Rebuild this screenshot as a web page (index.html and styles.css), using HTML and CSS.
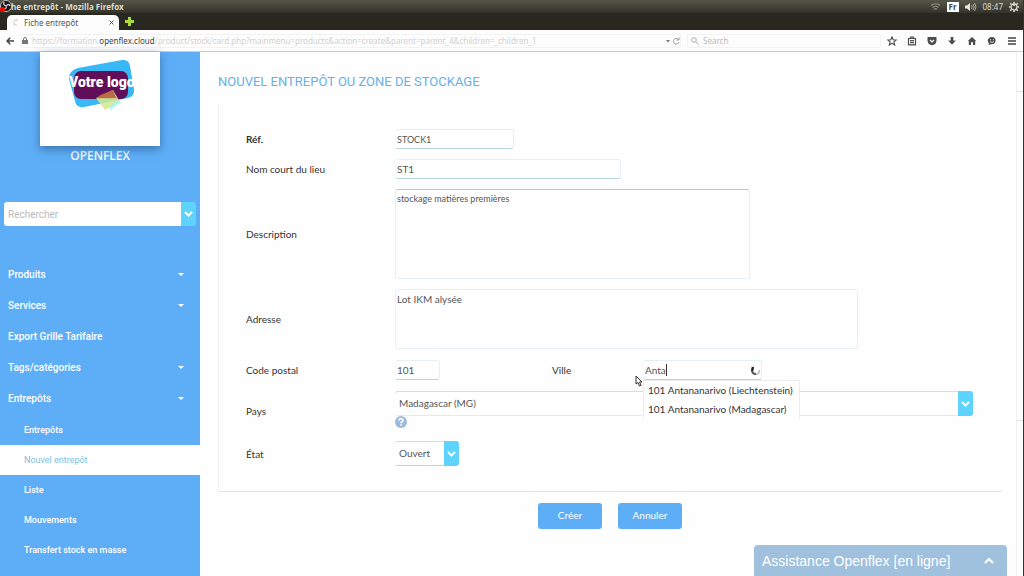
FILE: index.html
```html
<!DOCTYPE html>
<html lang="fr">
<head>
<meta charset="utf-8">
<title>Fiche entrepôt</title>
<link rel="stylesheet" href="styles.css">
</head>
<body>
<header class="browser">
  <div class="system-bar">
    <svg class="recorder" viewBox="0 0 14 14"><circle cx="6" cy="6" r="5.5" fill="#161616" stroke="#ddd" stroke-width=".8"/><path d="M6 6Q3 5 4 2M6 6Q9 3 10 6M6 6Q7 9 4 9" fill="none" stroke="#ccc" stroke-width="1.3"/><circle cx="2.5" cy="9.5" r="2.5" fill="#f00"/></svg>
    <span class="window-title">che entrepôt - Mozilla Firefox</span>
    <div class="tray">
      <svg width="11" height="10" viewBox="0 0 11 10" fill="none" stroke="#8d8c83" stroke-width="1.2"><path d="M1 3.5Q5.500 0 10 3.500M2.500 5.500Q5.500 3 8.500 5.500M4 7.300Q5.500 6 7 7.300"/></svg>
      <span class="lang">Fr</span>
      <svg width="12" height="10" viewBox="0 0 12 10"><path d="M0 3.500H2L5 1V9L2 6.500H0Z" fill="#e6e4dd"/><path d="M6.500 3Q8 5 6.500 7M8 2Q10.500 5 8 8M9.500 1Q12.500 5 9.500 9" fill="none" stroke="#aaa89f"/></svg>
      <span>08:47</span>
      <svg width="10" height="10" viewBox="0 0 10 10" fill="none" stroke="#dfdcd2"><circle cx="5" cy="5" r="3" stroke-width="1.300"/><path stroke-width="1.500" d="M5 0V4M5 8.500V10M0 5H1.500M8.500 5H10M1.300 1.300L2.500 2.500M7.500 7.500L8.700 8.700M8.700 1.300L7.500 2.500M2.500 7.500L1.300 8.700"/></svg>
    </div>
  </div>
  <div class="tab-bar">
    <div class="tab">
      <svg width="7" height="7" viewBox="0 0 7 7" fill="none" stroke="#c4c9ba"><path d="M1 2Q3 0 5 1M1 3V6H4"/></svg>
      <span class="tab-name">Fiche entrepôt</span>
      <button class="plain" aria-label="Fermer l'onglet"><svg width="5" height="5" viewBox="0 0 5 5" stroke="#555"><path d="M.5 .5L4.500 4.500M4.500 .5L.5 4.500"/></svg></button>
    </div>
    <button class="plain new-tab" aria-label="Nouvel onglet"><svg width="9" height="9" viewBox="0 0 9 9"><path d="M3 0H6V3H9V6H6V9H3V6H0V3H3Z" fill="#aadd3a"/></svg></button>
  </div>
  <div class="nav-bar">
    <button class="plain back" aria-label="Retour"><svg width="8" height="8" viewBox="0 0 8 8" fill="none" stroke="#444" stroke-width="1.600"><path d="M4.200 .7L1 4L4.200 7.300M1 4H8"/></svg></button>
    <div class="address">
      <svg width="6" height="7" viewBox="0 0 6 7"><path d="M1.500 3V2Q1.500 .6 3 .6T4.500 2V3" fill="none" stroke="#777"/><path d="M0 3H6V7H0Z" fill="#777"/></svg>
      <span class="url">https://formation.<b>openflex.cloud</b>/product/stock/card.php?mainmenu=products&amp;action=create&amp;parent=parent_4&amp;children=_children_1</span>
      <svg width="14" height="8" viewBox="0 0 14 8"><path d="M0 3H4L2 5.500Z" fill="#777"/><path d="M12.500 2.500A2.800 2.800 0 1 0 13 5M13 .5V3H10.500" fill="none" stroke="#999"/></svg>
    </div>
    <label class="search"><svg width="8" height="8" viewBox="0 0 8 8" fill="none" stroke="#aaa"><circle cx="3" cy="3" r="2.300"/><path d="M4.700 4.700L7.500 7.500"/></svg><input type="text" placeholder="Search" aria-label="Search"></label>
    <div class="tools">
      <svg width="10" height="10" viewBox="0 0 10 10" fill="none" stroke="#4c4c4c" stroke-width="1.100"><path d="M5 .9L6.200 3.700L9.300 3.900L6.900 5.900L7.700 9L5 7.300L2.300 9L3.100 5.900L.7 3.900L3.800 3.700Z"/></svg>
      <svg width="10" height="10" viewBox="0 0 10 10" fill="none" stroke="#4c4c4c" stroke-width="1.200"><path d="M1.500 2.500H8.500V8.800H1.500ZM3.500 2V1H6.500V2M3 4.700H7M3 6.700H7"/></svg>
      <svg width="10" height="10" viewBox="0 0 10 10"><path d="M.5 1H9.500V4.500Q9 9 5 9.200Q1 9 .5 4.500Z" fill="#4c4c4c"/><path d="M3 4L5 6L7 4" fill="none" stroke="#fff" stroke-width="1.200"/></svg>
      <svg width="10" height="10" viewBox="0 0 10 10"><path d="M3.700 1H6.300V4.500H8.800L5 8.800L1.200 4.500H3.700Z" fill="#4c4c4c"/></svg>
      <svg width="10" height="10" viewBox="0 0 10 10"><path d="M5 1L9.200 5H8.200V9H6V6.200H4V9H1.800V5H.8Z" fill="#4c4c4c"/></svg>
      <svg width="10" height="10" viewBox="0 0 10 10"><path d="M5 1A4 3.600 0 1 1 4 8.200L1.500 9L2 7.200A4 3.600 0 0 1 5 1Z" fill="#4c4c4c"/><path d="M3 5.500Q5 7.500 7 5.500M3 3.700H4M6 3.700H7" fill="none" stroke="#fff" stroke-width=".8"/></svg>
      <svg width="10" height="10" viewBox="0 0 10 10" stroke="#444" stroke-width="1.500"><path d="M1 2H9M1 5H9M1 8H9"/></svg>
    </div>
  </div>
</header>
<div class="page">
  <aside class="sidebar">
    <div class="logo">
      <svg width="70" height="52" viewBox="0 0 70 52"><path d="M10 9L54 1Q61 0 62 7L66 30Q67 37 60 39L16 48Q8 49 7 42L1 20Q0 12 10 9Z" fill="#38b8f4"/><rect x="6" y="12" width="54" height="28" rx="7" fill="#610e59"/><path d="M28 39L45 31L52 43L37 51Z" fill="#d5e890" opacity=".85"/><path d="M32 36L45 31L48 39H29Z" fill="#b85d38" opacity=".85"/><path d="M43 45L51 41L53 44L41 52Z" fill="#a7edf3" opacity=".7"/></svg>
      <span class="logo-text">Votre logo</span>
    </div>
    <div class="company">OPENFLEX</div>
    <div class="quick-search">
      <input type="text" placeholder="Rechercher" aria-label="Rechercher">
      <button class="drop" aria-label="Options de recherche"><svg width="9" height="6" viewBox="0 0 9 6"><path d="M1 1L4.500 4.500L8 1"/></svg></button>
    </div>
    <nav class="menu">
      <a href="#">Produits<i class="caret"></i></a>
      <a href="#">Services<i class="caret"></i></a>
      <a href="#">Export Grille Tarifaire</a>
      <a href="#">Tags/catégories<i class="caret"></i></a>
      <a href="#">Entrepôts<i class="caret"></i></a>
      <div class="submenu">
        <a href="#">Entrepôts</a>
        <a href="#" class="active">Nouvel entrepôt</a>
        <a href="#">Liste</a>
        <a href="#">Mouvements</a>
        <a href="#">Transfert stock en masse</a>
      </div>
    </nav>
  </aside>
  <main class="main">
    <h1>NOUVEL ENTREPÔT OU ZONE DE STOCKAGE</h1>
    <form>
      <div class="panel">
        <div class="row"><label class="required" for="ref">Réf.</label><input class="field w-ref compact" id="ref" type="text" value="STOCK1"></div>
        <div class="row"><label for="lieu">Nom court du lieu</label><input class="field w-name" id="lieu" type="text" value="ST1"></div>
        <div class="row"><label for="desc">Description</label><textarea class="field w-desc compact" id="desc">stockage matières premières</textarea></div>
        <div class="row"><label for="adr">Adresse</label><textarea class="field w-address" id="adr">Lot IKM alysée</textarea></div>
        <div class="row row-city">
          <label for="cp">Code postal</label><input class="field w-zip" id="cp" type="text" value="101">
          <label for="ville">Ville</label>
          <div class="city">
            <input class="field w-ref" id="ville" type="text" value="Anta">
            <span class="text-caret"></span>
            <svg class="spinner" width="11" height="10" viewBox="0 0 11 10" fill="none"><path d="M3 1L2 5" stroke="#222" stroke-width="2.500"/><path d="M2 5Q3 8.500 6 8" stroke="#555" stroke-width="2"/><path d="M6 8.500Q9.500 8 9.500 4" stroke="#bbb" stroke-width="1.500"/></svg>
            <svg class="pointer" width="8" height="12" viewBox="0 0 8 12"><path d="M1 1V9L3 7.500L4.500 11L6 10.200L4.500 7H7Z" fill="#fff" stroke="#333"/></svg>
            <ul class="suggestions"><li>101 Antananarivo (Liechtenstein)</li><li>101 Antananarivo (Madagascar)</li></ul>
          </div>
        </div>
        <div class="row row-country">
          <label for="pays">Pays</label>
          <div class="country">
            <div class="select"><select id="pays"><option>Madagascar (MG)</option></select><span class="drop"><svg width="9" height="6" viewBox="0 0 9 6"><path d="M1 1L4.500 4.500L8 1"/></svg></span></div>
            <svg width="12" height="12" viewBox="0 0 12 12"><circle cx="6" cy="6" r="6" fill="#9db9dd"/><path d="M3.900 4.500Q4 2.700 6 2.700T8 4.400Q8 5.400 6 6.500V7.300M6 8.300V9.800" fill="none" stroke="#fff" stroke-width="1.600"/></svg>
          </div>
        </div>
        <div class="row"><label for="etat">État</label><div class="select select-state"><select id="etat"><option>Ouvert</option></select><span class="drop"><svg width="9" height="6" viewBox="0 0 9 6"><path d="M1 1L4.500 4.500L8 1"/></svg></span></div></div>
      </div>
      <div class="actions"><button type="button">Créer</button><button type="button">Annuler</button></div>
    </form>
  </main>
  <div class="scrollbar"><div class="thumb"></div></div>
  <button class="assistance"><span>Assistance Openflex [en ligne]</span><svg width="10" height="7" viewBox="0 0 10 7"><path d="M1 6L5 2L9 6" fill="none" stroke="#fff" stroke-width="2.200"/></svg></button>
</div>
</body>
</html>
```

FILE: styles.css
```css
* { box-sizing: border-box; }

body {
  margin: 0;
  height: 100vh;
  display: flex;
  flex-direction: column;
  overflow: hidden;
  background: #fefefe;
  border-right: 1px solid #33332c;
  font-family: Roboto, sans-serif;
  font-size: 10px;
  color: #333;
}

svg { flex: none; display: block; }
a { color: inherit; text-decoration: none; }
button, input, select, textarea { font: inherit; color: inherit; margin: 0; }
.plain { border: 0; padding: 0; background: none; }

.browser { font-family: "Noto Sans", sans-serif; font-size: 8px; }

.system-bar {
  position: relative;
  height: 13px;
  padding: 0 4px 0 7px;
  display: flex;
  align-items: center;
  justify-content: space-between;
  background: linear-gradient(#55554a, #33332a);
  color: #dfdcd2;
}
.recorder { position: absolute; left: 0; top: 0; width: 14px; height: 14px; }
.window-title { font-family: "Open Sans", sans-serif; font-weight: 700; }
.tray { display: flex; align-items: center; gap: 6px; }
.lang {
  padding: 0 2px;
  line-height: 10px;
  background: #fff;
  color: #444;
  font-weight: 700;
}

.tab-bar {
  height: 17px;
  display: flex;
  align-items: flex-end;
  gap: 6px;
  padding-left: 7px;
  background: #282820;
}
.tab {
  width: 112px;
  height: 15px;
  display: flex;
  align-items: center;
  gap: 4px;
  padding: 0 5px 0 6px;
  border-radius: 5px 5px 0 0;
  background: #fdfdfd;
  color: #555;
}
.tab-name { flex: 1; }
.new-tab { align-self: center; }

.nav-bar {
  height: 22px;
  display: flex;
  align-items: center;
  gap: 6px;
  padding: 0 6px;
  border-bottom: 1px solid #ccc;
  background: #fdfdfd;
}
.back { padding-right: 1px; }
.address, .search {
  height: 14px;
  display: flex;
  align-items: center;
  gap: 4px;
  border: 1px solid #f2f2f2;
  border-radius: 2px;
}
.address { flex: 1; }
.url { flex: 1; white-space: nowrap; color: #d2d2d2; }
.url b { font-weight: 400; color: #444; }
.search { width: 194px; padding-left: 3px; }
.search input { width: 100%; border: 0; padding: 0; background: none; }
.search input::placeholder { color: #bbb; }
.tools { display: flex; gap: 10px; }

.page { position: relative; flex: 1; min-height: 0; display: flex; }

.sidebar { width: 200px; flex: none; background: #5eaef7; color: #fff; }
.logo {
  position: relative;
  width: 120px;
  height: 94px;
  margin: 0 auto;
  padding: 7px 0 0 28px;
  background: #fff;
  box-shadow: 0 3px 9px rgba(30, 70, 120, .6);
}
.logo-text {
  position: absolute;
  left: 29px;
  top: 21px;
  font: 900 14px/18px Roboto, sans-serif;
  white-space: nowrap;
}
.company { padding-top: 2px; text-align: center; font: 500 12px/16px "Noto Sans", sans-serif; }
.quick-search { height: 24px; display: flex; margin: 38px 4px 33px; }
.quick-search input {
  flex: 1;
  min-width: 0;
  border: 0;
  padding: 0 4px;
  border-radius: 3px 0 0 3px;
  background: #fff;
}
.quick-search input::placeholder { color: #bbb; }
.drop {
  width: 15px;
  flex: none;
  display: flex;
  align-items: center;
  justify-content: center;
  padding: 0;
  border: 0;
  border-radius: 0 3px 3px 0;
  background: #5dd3fd;
}
.drop path { fill: none; stroke: #fff; stroke-width: 2; }

.menu a {
  display: flex;
  align-items: center;
  justify-content: space-between;
  line-height: 31px;
  padding: 0 16px 0 8px;
  font-size: 10px;
  font-weight: 500;
}
.caret { border: 3px solid transparent; border-top-color: #fff; border-bottom: 0; }
.submenu { padding-top: 1px; }
.submenu a { padding-left: 24px; line-height: 30px; font-size: 9px; }
.submenu .active { background: #fff; color: #7cc0e0; font-weight: 400; }

.main {
  flex: 1;
  min-width: 0;
  padding: 20px 14px 0 18px;
  font-family: Lato, sans-serif;
}
h1 {
  margin: 0 0 11px;
  font: 400 13px/20px Roboto, sans-serif;
  color: #66b1e5;
}
.panel {
  display: grid;
  gap: 10px;
  padding: 26px 28px 25px 27px;
  border-left: 1px solid #f3f3f3;
  border-bottom: 1px solid #e2e5e6;
}
.row {
  display: grid;
  grid-template-columns: 149px 1fr;
  align-items: center;
}
.row-city { grid-template-columns: 149px 157px 91px 1fr; }
.row-country { min-height: 40px; }
.required { font-weight: 700; }

.field {
  display: block;
  height: 20px;
  padding: 0 1px;
  border: 1px solid #e3f1f4;
  border-bottom-color: #b5d7db;
  border-left-color: #f5fafb;
  border-radius: 3px;
  background: #fff;
  color: #555;
  outline: 0;
}
textarea.field { padding: 3px 1px; line-height: 12px; resize: none; border-color: #e3f1f4; }
.compact { font-size: 9px; }
.w-ref { width: 119px; }
.w-name { width: 226px; }
.w-zip { width: 45px; }
.w-desc { width: 355px; height: 90px; }
textarea.w-desc { border-top-color: #a3d0da; }
.w-address { width: 463px; height: 60px; }

.city { position: relative; padding: 1px 0; }
.text-caret { position: absolute; left: 23px; top: 5px; width: 1px; height: 12px; background: #333; }
.spinner { position: absolute; left: 107px; top: 7px; }
.pointer { position: absolute; left: -8px; top: 16px; }
.suggestions {
  position: absolute;
  left: 0;
  top: 21px;
  z-index: 1;
  margin: 0;
  padding: 0 6px 0 4px;
  list-style: none;
  border: 1px solid #ececec;
  border-bottom: 0;
  background: #fff;
  line-height: 19px;
  white-space: nowrap;
}

.country { display: grid; align-self: start; }
.select { display: flex; width: 578px; max-width: 100%; height: 25px; }
.select-state { width: 64px; }
.select select {
  flex: 1;
  min-width: 0;
  appearance: none;
  padding: 0 4px 2px;
  border: 1px solid #e0edf0;
  border-width: 1px 0;
  border-top-color: #cfdfe2;
  border-radius: 3px 0 0 3px;
  background: #fff;
  color: #555;
}
.select-state select { border-bottom-color: #b5d7db; }

.actions { display: flex; justify-content: center; gap: 16px; padding-top: 11px; }
.actions button {
  width: 64px;
  height: 26px;
  padding: 0 0 2px;
  border: 0;
  border-radius: 3px;
  background: #5eaef7;
  color: #fff;
}

.scrollbar { width: 7px; padding-top: 39px; border-left: 1px solid #f0f0f0; }
.thumb { height: 330px; border: solid #ddd; border-width: 1px 0; background: #fefefe; }

.assistance {
  position: absolute;
  right: 16px;
  bottom: 0;
  width: 253px;
  height: 31px;
  display: flex;
  align-items: center;
  justify-content: space-between;
  padding: 0 13px 0 8px;
  border: 0;
  border-radius: 4px 4px 0 0;
  background: #9fc1de;
  color: #fff;
  font: 14px "Liberation Sans", sans-serif;
}
```
